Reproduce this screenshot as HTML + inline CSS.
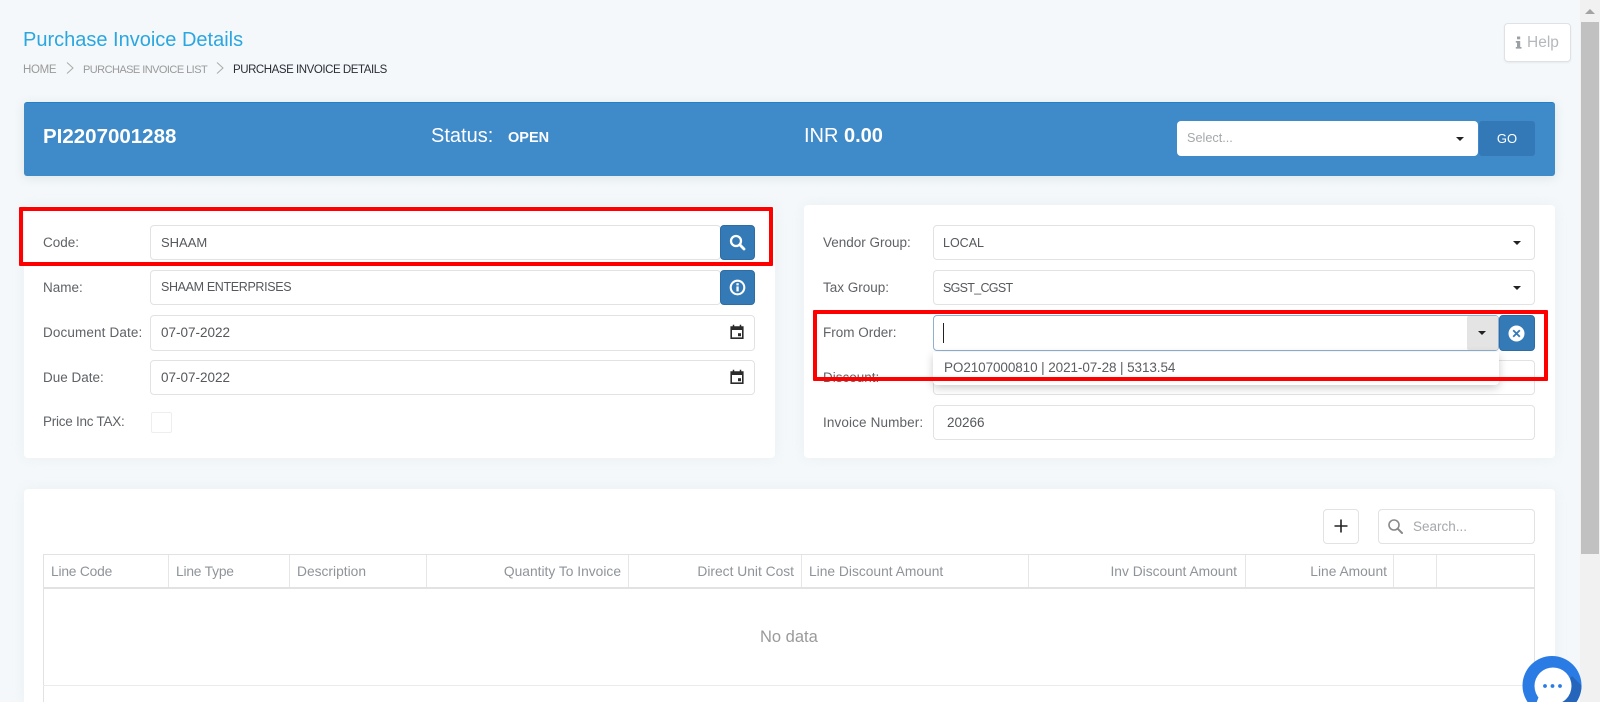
<!DOCTYPE html>
<html><head><meta charset="utf-8"><style>
html,body{margin:0;padding:0;width:1600px;height:702px;overflow:hidden;background:#f4f8fa;font-family:"Liberation Sans",sans-serif;color:#555}
#r{position:relative;width:1600px;height:702px;overflow:hidden;background:#f4f8fa}
#r div,#r span{position:absolute;box-sizing:border-box;white-space:nowrap}
.card{background:#fff;border-radius:4px;box-shadow:0 0 14px rgba(200,210,215,.2)}
.lb{font-size:13.5px;line-height:20px;color:#5f6266}
.in{background:#fff;border:1px solid #e2e2e2;border-radius:4px;height:35px;font-size:13.5px;line-height:33px;color:#55585c;padding-left:10px}
.btn{background:#337ab7;border:1px solid #2e6da4;border-radius:4px;width:35px;height:35px}
.car{width:0;height:0;border-left:4px solid transparent;border-right:4px solid transparent;border-top:4px solid #222}
.th{font-size:13.8px;line-height:20px;top:562px;color:#8f9499}
.vl{width:1px;top:555px;height:32px;background:#e6e6e6}
.red{border:4px solid #f00;border-radius:1px}
svg{position:absolute;display:block}
</style></head><body><div id="r">

<div style="left:23px;top:27px;font-size:20px;line-height:26px;color:#2ba6e0">Purchase Invoice Details</div>
<div style="left:23px;top:62px;font-size:11.5px;line-height:16px;color:#9a9a9a;letter-spacing:-.3px">HOME</div>
<svg style="left:65px;top:61px" width="10" height="14" viewBox="0 0 10 14"><path d="M2 1.5 8 7 2 12.5" fill="none" stroke="#aaa" stroke-width="1"/></svg>
<div style="left:83px;top:62px;font-size:11px;line-height:16px;color:#9a9a9a;letter-spacing:-.55px">PURCHASE INVOICE LIST</div>
<svg style="left:215px;top:61px" width="10" height="14" viewBox="0 0 10 14"><path d="M2 1.5 8 7 2 12.5" fill="none" stroke="#aaa" stroke-width="1"/></svg>
<div style="left:233px;top:62px;font-size:11.5px;line-height:16px;color:#2a2f36;letter-spacing:-.45px">PURCHASE INVOICE DETAILS</div>

<div style="left:1504px;top:23px;width:67px;height:39px;background:#fff;border:1px solid #dfe2e4;border-radius:4px;box-shadow:0 1px 2px rgba(0,0,0,.06)"></div>
<svg style="left:1515px;top:36px" width="7" height="13" viewBox="0 0 7 13"><rect x="2" y="0.500" width="3.200" height="2.800" fill="#9aa0a4"/><path d="M.8 5h4.400v6H6.500v1.600H.8V11H2V6.600H.8z" fill="#9aa0a4"/></svg>
<div style="left:1527px;top:33px;font-size:15.5px;line-height:20px;color:#b4b8bb">Help</div>

<div style="left:23.5px;top:102px;width:1531px;height:74px;background:#3f8ac9;border-top:1px solid #2380c8;border-radius:3px;box-shadow:0 2px 10px rgba(160,175,185,.25)"></div>
<div style="left:43px;top:124px;font-size:20.5px;line-height:26px;font-weight:bold;color:#fff">PI2207001288</div>
<div style="left:431px;top:123px;font-size:20px;line-height:26px;color:#fff">Status:</div>
<div style="left:508px;top:127px;font-size:14.5px;line-height:22px;font-weight:bold;color:#fff">OPEN</div>
<div style="left:804px;top:123px;font-size:20px;line-height:26px;color:#fff">INR <b>0.00</b></div>
<div style="left:1177px;top:121px;width:301px;height:35px;background:#fff;border-radius:4px;font-size:12.7px;line-height:35px;color:#a5a8ab;padding-left:10px">Select...</div>
<div class="car" style="left:1456px;top:137px"></div>
<div style="left:1479px;top:121px;width:56px;height:35px;background:#3379b7;border-radius:3px;font-size:13px;line-height:35px;color:#fff;text-align:center">GO</div>

<!-- left card -->
<div class="card" style="left:23.5px;top:206px;width:751px;height:252px"></div>
<div class="lb" style="left:43px;top:233px">Code:</div>
<div class="in" style="left:150px;top:225px;width:571px;font-size:13px">SHAAM</div>
<div class="btn" style="left:720px;top:225px"></div>
<svg style="left:728px;top:233px" width="19" height="19" viewBox="0 0 19 19"><circle cx="8" cy="8" r="5" fill="none" stroke="#fff" stroke-width="2.3"/><path d="M11.8 11.8 16 16" stroke="#fff" stroke-width="2.8" stroke-linecap="round"/></svg>
<div class="lb" style="left:43px;top:278px">Name:</div>
<div class="in" style="left:150px;top:270px;width:571px;font-size:12.5px;letter-spacing:-.35px">SHAAM ENTERPRISES</div>
<div class="btn" style="left:720px;top:270px"></div>
<svg style="left:728px;top:278px" width="19" height="19" viewBox="0 0 19 19"><circle cx="9.5" cy="9.5" r="6.8" fill="none" stroke="#fff" stroke-width="2.1"/><rect x="8.4" y="8.400" width="2.300" height="5" fill="#fff"/><rect x="8.4" y="5.200" width="2.300" height="2.200" fill="#fff"/></svg>
<div class="lb" style="left:43px;top:323px;letter-spacing:.13px">Document Date:</div>
<div class="in" style="left:150px;top:315px;width:605px;height:36px;line-height:34px">07-07-2022</div>
<svg style="left:729px;top:324px" width="16" height="16" viewBox="0 0 16 16"><path d="M2.2 3h11.6v11.200H2.200z" fill="none" stroke="#2b2b2b" stroke-width="1.6"/><path d="M2 2.500h12v3.500H2z" fill="#2b2b2b"/><path d="M4.500.8v2M11.500.8v2" stroke="#2b2b2b" stroke-width="1.5"/><rect x="9" y="9.200" width="3" height="3" fill="#2b2b2b"/></svg>
<div class="lb" style="left:43px;top:368px">Due Date:</div>
<div class="in" style="left:150px;top:360px;width:605px">07-07-2022</div>
<svg style="left:729px;top:369px" width="16" height="16" viewBox="0 0 16 16"><path d="M2.200 3h11.600v11.200H2.200z" fill="none" stroke="#2b2b2b" stroke-width="1.6"/><path d="M2 2.500h12v3.500H2z" fill="#2b2b2b"/><path d="M4.500.8v2M11.500.8v2" stroke="#2b2b2b" stroke-width="1.5"/><rect x="9" y="9.200" width="3" height="3" fill="#2b2b2b"/></svg>
<div class="lb" style="left:43px;top:412px;letter-spacing:-.25px">Price Inc TAX:</div>
<div style="left:151px;top:412px;width:21px;height:21px;border:1px solid #eee;border-radius:2px;background:#fff"></div>

<!-- right card -->
<div class="card" style="left:804px;top:205px;width:751px;height:253px"></div>
<div class="lb" style="left:823px;top:233px">Vendor Group:</div>
<div class="in" style="left:933px;top:225px;width:602px;font-size:12.5px;padding-left:9px;line-height:34px">LOCAL</div>
<div class="car" style="left:1513px;top:241px"></div>
<div class="lb" style="left:823px;top:278px">Tax Group:</div>
<div class="in" style="left:933px;top:270px;width:602px;font-size:12.5px;padding-left:9px;letter-spacing:-.7px;line-height:34px">SGST_CGST</div>
<div class="car" style="left:1513px;top:286px"></div>
<div class="lb" style="left:823px;top:323px">From Order:</div>
<div class="in" style="left:933px;top:360px;width:602px"></div>
<div class="lb" style="left:823px;top:368px">Discount:</div>
<div class="lb" style="left:823px;top:413px;letter-spacing:.13px">Invoice Number:</div>
<div class="in" style="left:933px;top:405px;width:602px;padding-left:13px;line-height:34px">20266</div>
<div style="left:933px;top:315px;width:566px;height:36px;background:#fff;border:1px solid #8fb0d2;border-radius:4px"></div>
<div style="left:943px;top:323px;width:1px;height:20px;background:#222"></div>
<div style="left:1467px;top:316px;width:31px;height:34px;background:#e4e4e4;border-radius:2px"></div>
<div class="car" style="left:1478px;top:331px"></div>
<div class="btn" style="left:1499px;top:315px;width:36px;height:36px"></div>
<svg style="left:1508px;top:325px" width="17" height="17" viewBox="0 0 17 17"><circle cx="8.5" cy="8.5" r="8" fill="#fff"/><path d="M5.200 5.200 11.800 11.800M11.800 5.200 5.200 11.800" stroke="#337ab7" stroke-width="1.8"/></svg>
<div style="left:933px;top:352px;width:566px;height:33px;background:#fff;border-radius:0 0 4px 4px;box-shadow:0 3px 9px rgba(0,0,0,.2);font-size:13.5px;line-height:32px;letter-spacing:-.09px;color:#5a5d61;padding-left:11px">PO2107000810 | 2021-07-28 | 5313.54</div>

<!-- table card -->
<div class="card" style="left:23.5px;top:489px;width:1531px;height:213px;border-radius:4px 4px 0 0"></div>
<div style="left:1323px;top:509px;width:36px;height:35px;background:#fff;border:1px solid #e2e2e2;border-radius:4px"></div>
<svg style="left:1333px;top:518px" width="16" height="16" viewBox="0 0 16 16"><path d="M8 1.500v13M1.500 8h13" stroke="#222" stroke-width="1.6"/></svg>
<div style="left:1378px;top:509px;width:157px;height:35px;background:#fff;border:1px solid #e2e2e2;border-radius:4px;font-size:13.5px;line-height:34px;color:#a5a8ab;padding-left:34px">Search...</div>
<svg style="left:1387px;top:518px" width="17" height="17" viewBox="0 0 17 17"><circle cx="7" cy="7" r="5" fill="none" stroke="#8a8a8a" stroke-width="1.6"/><path d="M10.700 10.700 15 15" stroke="#8a8a8a" stroke-width="2" stroke-linecap="round"/></svg>

<div style="left:43px;top:554px;width:1492px;height:148px;border:1px solid #e2e2e2;border-bottom:0;background:#fff"></div>
<div style="left:43px;top:587px;width:1492px;height:2px;background:#e2e2e2"></div>
<div style="left:43px;top:685px;width:1492px;height:1px;background:#ebebeb"></div>
<div class="vl" style="left:168px"></div><div class="vl" style="left:289px"></div><div class="vl" style="left:426px"></div><div class="vl" style="left:628px"></div><div class="vl" style="left:801px"></div><div class="vl" style="left:1028px"></div><div class="vl" style="left:1245px"></div><div class="vl" style="left:1393px"></div><div class="vl" style="left:1436px"></div>
<div class="th" style="left:51px;letter-spacing:-.2px">Line Code</div>
<div class="th" style="left:176px;letter-spacing:-.2px">Line Type</div>
<div class="th" style="left:297px">Description</div>
<div class="th" style="right:979px">Quantity To Invoice</div>
<div class="th" style="right:806px">Direct Unit Cost</div>
<div class="th" style="left:809px">Line Discount Amount</div>
<div class="th" style="right:363px">Inv Discount Amount</div>
<div class="th" style="right:213px">Line Amount</div>
<div style="left:760px;top:627px;font-size:16.5px;line-height:21px;color:#9a9a9a">No data</div>

<!-- red boxes -->
<div class="red" style="left:18.5px;top:207px;width:754px;height:59px"></div>
<div class="red" style="left:813px;top:310px;width:735px;height:71px"></div>

<!-- scrollbar -->
<div style="left:1580px;top:0;width:20px;height:702px;background:#f1f1f1"></div>
<div style="left:1581px;top:22px;width:18px;height:532px;background:#c1c1c1"></div>
<div style="left:1585px;top:9px;width:0;height:0;border-left:5px solid transparent;border-right:5px solid transparent;border-bottom:5px solid #a3a3a3"></div>

<!-- chat -->
<svg style="left:1520px;top:654px" width="66" height="48" viewBox="0 0 66 48"><defs><clipPath id="c"><circle cx="32" cy="31.500" r="29.500"/></clipPath></defs><circle cx="32" cy="31.500" r="29.500" fill="#2a7be4"/><path d="M52 22 66 36V48H30z" fill="#2566bc" clip-path="url(#c)"/><circle cx="33" cy="32" r="18.500" fill="#fff"/><path d="M19 42 16 50 30 47z" fill="#fff"/><circle cx="25" cy="32" r="1.900" fill="#2a7be4"/><circle cx="32.500" cy="32" r="1.900" fill="#2a7be4"/><circle cx="40" cy="32" r="1.900" fill="#2a7be4"/></svg>
</div></body></html>
